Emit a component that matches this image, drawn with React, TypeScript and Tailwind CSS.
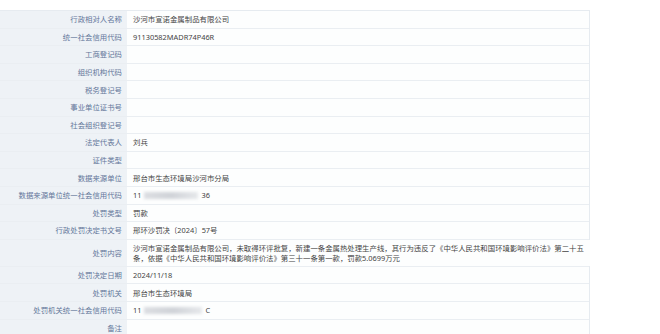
import React from "react";

type Row = { label: string; value?: React.ReactNode };

function Masked({ head, tail, width }: { head: string; tail: string; width: number }) {
  return (
    <span className="inline-flex items-center">
      <span>{head}</span>
      <span className="relative inline-block h-[7px] mx-[3px]" style={{ width }}>
        <span className="absolute inset-0 bg-gradient-to-r from-[#dcdee2] via-[#d0d3d8] to-[#e6e8eb] blur-[1.5px]" />
      </span>
      <span>{tail}</span>
    </span>
  );
}

const rows: Row[] = [
  { label: "行政相对人名称", value: "沙河市宣诺金属制品有限公司" },
  { label: "统一社会信用代码", value: "91130582MADR74P46R" },
  { label: "工商登记码" },
  { label: "组织机构代码" },
  { label: "税务登记号" },
  { label: "事业单位证书号" },
  { label: "社会组织登记号" },
  { label: "法定代表人", value: "刘兵" },
  { label: "证件类型" },
  { label: "数据来源单位", value: "邢台市生态环境局沙河市分局" },
  { label: "数据来源单位统一社会信用代码", value: <Masked head="11" tail="36" width={54} /> },
  { label: "处罚类型", value: "罚款" },
  { label: "行政处罚决定书文号", value: "邢环沙罚决〔2024〕57号" },
  {
    label: "处罚内容",
    value: (
      <>
        沙河市宣诺金属制品有限公司，未取得环评批复，新建一条金属热处理生产线，其行为违反了《中华人民共和国环境影响评价法》第二十五
        <br />
        条，依据《中华人民共和国环境影响评价法》第三十一条第一款，罚款5.0699万元
      </>
    ),
  },
  { label: "处罚决定日期", value: "2024/11/18" },
  { label: "处罚机关", value: "邢台市生态环境局" },
  { label: "处罚机关统一社会信用代码", value: <Masked head="11" tail="C" width={58} /> },
  { label: "备注" },
];

export default function App() {
  return (
    <div
      className="w-[660px] h-[334px] overflow-hidden bg-white pt-[10px]"
      style={{ fontFamily: '"Noto Sans", "Noto Sans CJK SC", sans-serif' }}
    >
      <div className="w-[590px] border-t border-r border-[#e6ebf0] text-[7.4px] leading-[10px]">
        {rows.map((r) => (
          <div key={r.label} className="flex border-b border-[#eaeef2]">
            <div className="w-[127px] shrink-0 bg-[#eef2f6] text-[#64779a] text-right pr-[5px] py-[3px] min-h-[16.6px] flex items-center justify-end whitespace-nowrap">
              {r.label}
            </div>
            <div className="flex-1 bg-[#fdfefe] text-[#444] pl-[6px] pr-[6px] py-[3px] min-h-[16.6px] flex items-center whitespace-nowrap">
              <div>{r.value}</div>
            </div>
          </div>
        ))}
      </div>
    </div>
  );
}
